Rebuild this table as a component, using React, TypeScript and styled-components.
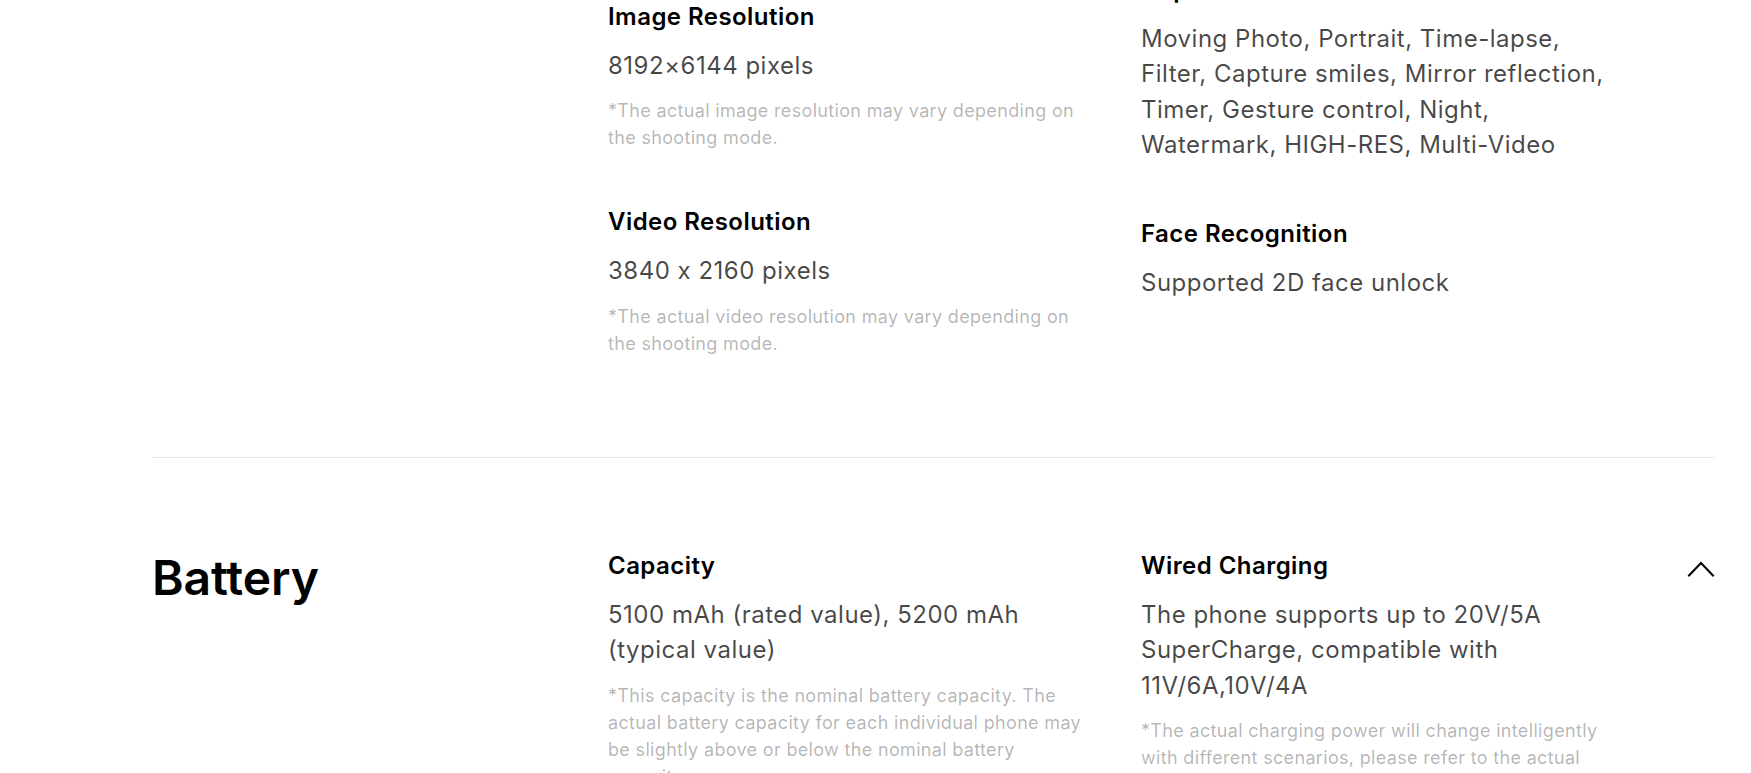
import React from "react";
import styled, { createGlobalStyle } from "styled-components";

const GlobalStyle = createGlobalStyle`
  * { box-sizing: border-box; }
  html, body { margin: 0; padding: 0; background: #ffffff; }
  body {
    font-family: "Inter", "Roboto", "Liberation Sans", sans-serif;
    font-feature-settings: "calt" 0;
    color: #000000;
    -webkit-font-smoothing: antialiased;
  }
`;

/* The page is shown scrolled: the viewport clips, the page is moved up by the scroll amount. */
const SCROLL_TOP = 297;

const Viewport = styled.div`
  height: 100vh;
  overflow: hidden;
`;

const Page = styled.main<{ $scroll: number }>`
  margin-top: ${(p) => -p.$scroll}px;
  padding: 0 36px 0 152px;
`;

const Section = styled.section`
  display: grid;
  grid-template-columns: 456px 1013px 1fr;
  align-items: start;
  padding: 92px 0 100px;
  border-bottom: 1px solid #e6e6e6;
`;

const SectionTitle = styled.h2`
  margin: 0;
  font-size: 48px;
  line-height: 56px;
  font-weight: 600;
  color: #000000;
  letter-spacing: -0.1px;
`;

const SpecGrid = styled.div`
  display: grid;
  grid-template-columns: 480px 480px;
  column-gap: 53px;
  align-items: start;
`;

const SpecColumn = styled.div`
  display: flex;
  flex-direction: column;
  gap: 55px;
`;

const SpecItem = styled.div`
  display: flex;
  flex-direction: column;
`;

const SpecTitle = styled.h3`
  margin: 0;
  font-size: 24px;
  line-height: 32px;
  font-weight: 600;
  letter-spacing: 0.45px;
  color: #000000;
`;

const SpecValue = styled.p`
  margin: 15px 0 0;
  font-size: 24px;
  line-height: 35.5px;
  font-weight: 400;
  letter-spacing: 0.5px;
  color: rgba(0, 0, 0, 0.72);
`;

const SpecNote = styled.p`
  margin: 14px 0 0;
  font-size: 18px;
  line-height: 27px;
  font-weight: 400;
  letter-spacing: 0.33px;
  color: rgba(0, 0, 0, 0.3);
`;

const ToggleButton = styled.button`
  justify-self: end;
  margin-top: 10px;
  padding: 0;
  width: 28px;
  height: 17px;
  border: 0;
  background: transparent;
  cursor: pointer;
  display: flex;
  align-items: center;
  justify-content: center;
  color: #000000;
`;

type Spec = { title: string; value: string; note?: string };
type SectionData = { title: string; columns: [Spec[], Spec[]] };

const sections: SectionData[] = [
  {
    title: "Camera",
    columns: [
      [
        {
          title: "Front Camera",
          value: "50 MP (f/2.1 aperture)",
          note: "*The actual pixel count may vary depending on the shooting mode.",
        },
        {
          title: "Image Resolution",
          value: "8192×6144 pixels",
          note: "*The actual image resolution may vary depending on the shooting mode.",
        },
        {
          title: "Video Resolution",
          value: "3840 x 2160 pixels",
          note: "*The actual video resolution may vary depending on the shooting mode.",
        },
      ],
      [
        {
          title: "Zoom",
          value: "Up to 10x digital zoom",
          note: "*Supports digital zoom.",
        },
        {
          title: "Capture Modes",
          value:
            "Moving Photo, Portrait, Time-lapse, Filter, Capture smiles, Mirror reflection, Timer, Gesture control, Night, Watermark, HIGH-RES, Multi-Video",
        },
        { title: "Face Recognition", value: "Supported 2D face unlock" },
      ],
    ],
  },
  {
    title: "Battery",
    columns: [
      [
        {
          title: "Capacity",
          value: "5100 mAh (rated value), 5200 mAh (typical value)",
          note: "*This capacity is the nominal battery capacity. The actual battery capacity for each individual phone may be slightly above or below the nominal battery capacity.",
        },
      ],
      [
        {
          title: "Wired Charging",
          value: "The phone supports up to 20V/5A SuperCharge, compatible with 11V/6A,10V/4A",
          note: "*The actual charging power will change intelligently with different scenarios, please refer to the actual product experience.",
        },
      ],
    ],
  },
];

const ChevronUp = () => (
  <svg width="28" height="17" viewBox="0 0 28 17" fill="none" aria-hidden="true">
    <polyline
      points="2,15.5 14,3 26,15.5"
      stroke="currentColor"
      strokeWidth="2"
      strokeLinecap="square"
      strokeLinejoin="miter"
    />
  </svg>
);

const SpecBlock = ({ spec }: { spec: Spec }) => (
  <SpecItem>
    <SpecTitle>{spec.title}</SpecTitle>
    <SpecValue>{spec.value}</SpecValue>
    {spec.note && <SpecNote>{spec.note}</SpecNote>}
  </SpecItem>
);

export default function App() {
  return (
    <>
      <GlobalStyle />
      <Viewport>
        <Page $scroll={SCROLL_TOP}>
          {sections.map((section) => (
            <Section key={section.title}>
              <SectionTitle>{section.title}</SectionTitle>
              <SpecGrid>
                {section.columns.map((col, i) => (
                  <SpecColumn key={i}>
                    {col.map((spec) => (
                      <SpecBlock key={spec.title} spec={spec} />
                    ))}
                  </SpecColumn>
                ))}
              </SpecGrid>
              <ToggleButton aria-label={`Collapse ${section.title}`}>
                <ChevronUp />
              </ToggleButton>
            </Section>
          ))}
        </Page>
      </Viewport>
    </>
  );
}
